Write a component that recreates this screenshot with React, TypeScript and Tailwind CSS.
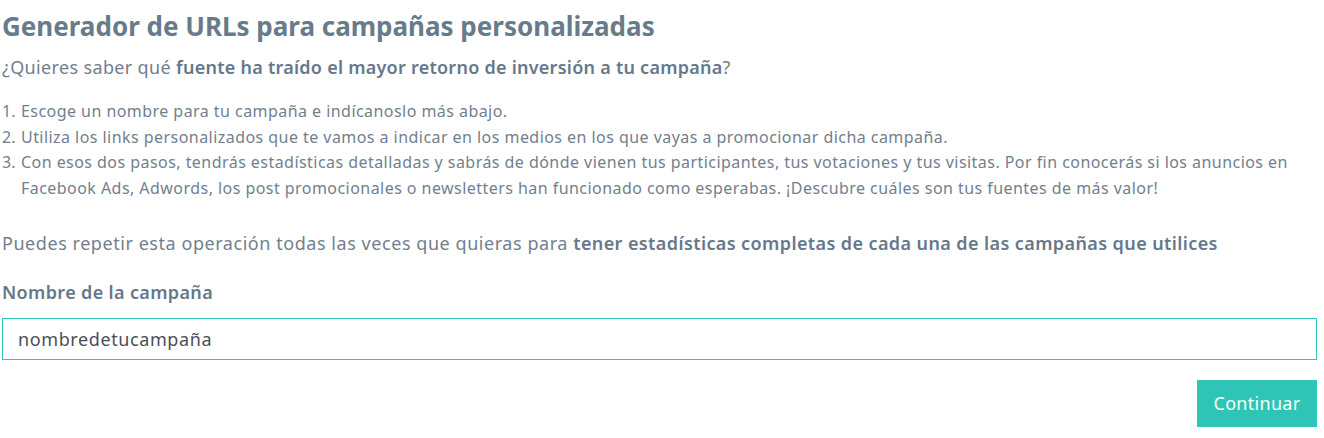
import React, { useState } from 'react';

const steps = [
  'Escoge un nombre para tu campaña e indícanoslo más abajo.',
  'Utiliza los links personalizados que te vamos a indicar en los medios en los que vayas a promocionar dicha campaña.',
  'Con esos dos pasos, tendrás estadísticas detalladas y sabrás de dónde vienen tus participantes, tus votaciones y tus visitas. Por fin conocerás si los anuncios en Facebook Ads, Adwords, los post promocionales o newsletters han funcionado como esperabas. ¡Descubre cuáles son tus fuentes de más valor!',
];

export default function App() {
  const [campaign, setCampaign] = useState('nombredetucampaña');

  return (
    <div className="min-h-screen bg-white pl-[2px] pr-[7px] pt-[8px] text-[#72808d] font-['Noto_Sans',sans-serif]">
      <h1 className="text-[26px] font-bold leading-[36px] text-[#687b8a]">
        Generador de URLs para campañas personalizadas
      </h1>
      <p className="mt-[9px] text-[18px] leading-[28px] tracking-[0.35px]">
        ¿Quieres saber qué <strong className="font-semibold text-[#66788a] tracking-[0.25px]">fuente ha traído el mayor retorno de inversión a tu campaña</strong>?
      </p>

      <ol className="mt-[18px] text-[16px] leading-[25.5px] tracking-[0.45px]">
        {steps.map((step, i) => (
          <li key={i} className="flex">
            <span className="w-[19px] shrink-0 tracking-normal">{i + 1}.</span>
            <span>{step}</span>
          </li>
        ))}
      </ol>

      <p className="mt-[28px] text-[18px] leading-[28px] tracking-[0.55px]">
        Puedes repetir esta operación todas las veces que quieras para{' '}
        <strong className="font-semibold text-[#66788a] tracking-[0.4px]">tener estadísticas completas de cada una de las campañas que utilices</strong>
      </p>

      <label className="mt-[21px] block text-[18px] font-semibold leading-[28px] tracking-[0.35px] text-[#66788a]">
        Nombre de la campaña
      </label>
      <input
        value={campaign}
        onChange={(e) => setCampaign(e.target.value)}
        className="mt-[12px] block h-[42px] w-full border border-[#2ec4b6] px-[15px] text-[18px] tracking-[0.6px] text-[#4a4f55] outline-none"
      />

      <div className="mt-[20px] flex justify-end">
        <button className="h-[47px] w-[120px] bg-[#2ec5b7] text-[18px] tracking-[0.3px] text-[#f4fff8]">
          Continuar
        </button>
      </div>
    </div>
  );
}
